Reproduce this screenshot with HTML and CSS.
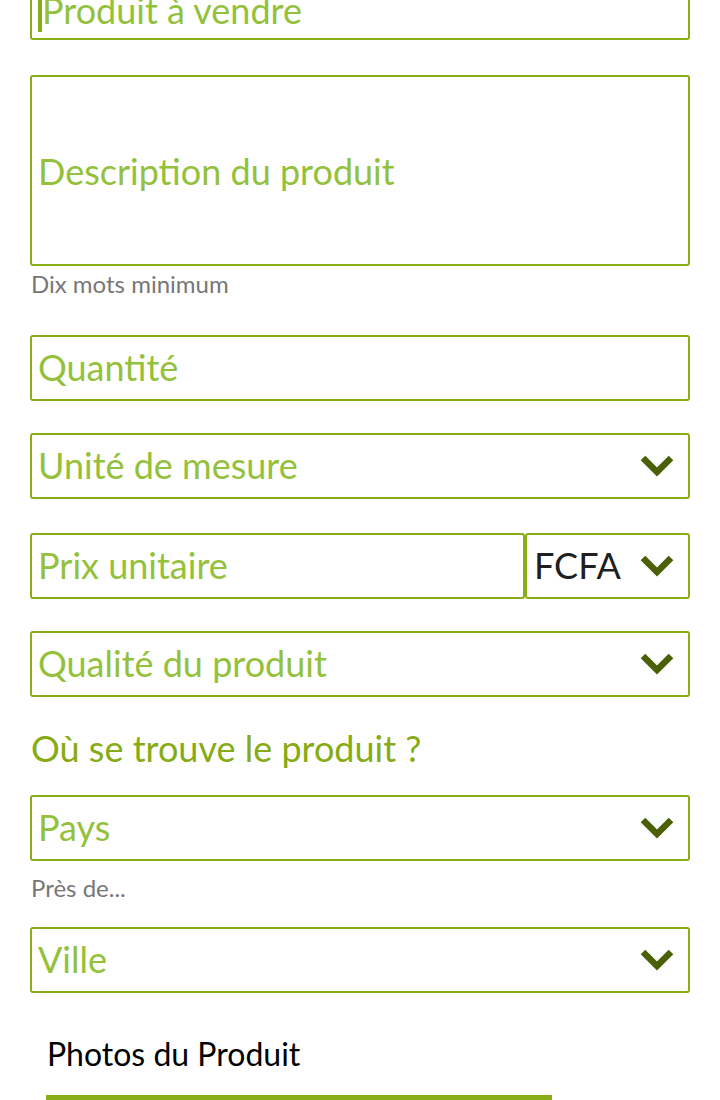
FILE: index.html
```html
<!DOCTYPE html>
<html lang="fr">
<head>
<meta charset="utf-8">
<title>Vendre un produit</title>
<link rel="stylesheet" href="styles.css">
</head>
<body>
<form class="form">
  <div class="field field-top"><span class="caret"></span><span class="ph">Produit à vendre</span></div>

  <div class="field field-area"><span class="ph">Description du produit</span></div>
  <p class="hint hint-desc">Dix mots minimum</p>

  <div class="field field-qty"><span class="ph">Quantité</span></div>

  <div class="field select gap-a"><span class="ph">Unité de mesure</span>
    <svg class="chev" viewBox="0 0 34 24" width="34" height="24"><polyline points="3,4 17,18 31,4" /></svg>
  </div>

  <div class="price-row gap-b">
    <div class="field price"><span class="ph">Prix unitaire</span></div>
    <div class="field select currency"><span class="val">FCFA</span>
      <svg class="chev" viewBox="0 0 34 24" width="34" height="24"><polyline points="3,4 17,18 31,4" /></svg>
    </div>
  </div>

  <div class="field select gap-c"><span class="ph">Qualité du produit</span>
    <svg class="chev" viewBox="0 0 34 24" width="34" height="24"><polyline points="3,4 17,18 31,4" /></svg>
  </div>

  <h2 class="section-title">Où se trouve le produit ?</h2>

  <div class="field select field-pays"><span class="ph">Pays</span>
    <svg class="chev" viewBox="0 0 34 24" width="34" height="24"><polyline points="3,4 17,18 31,4" /></svg>
  </div>
  <p class="hint hint-pres">Près de...</p>

  <div class="field select field-ville"><span class="ph">Ville</span>
    <svg class="chev" viewBox="0 0 34 24" width="34" height="24"><polyline points="3,4 17,18 31,4" /></svg>
  </div>

  <div class="tabs">
    <div class="tab active">Photos du Produit</div>
  </div>
</form>
</body>
</html>
```

FILE: styles.css
```css
* { box-sizing: border-box; }
html, body { margin: 0; padding: 0; background: #ffffff; }
body {
  font-family: Lato, "Noto Sans", sans-serif;
  overflow: hidden;
}
.form {
  margin: -26px 30px 0 30px;
  display: flex;
  flex-direction: column;
}
.field {
  height: 66px;
  border: 2px solid #88ad17;
  border-radius: 3px;
  display: flex;
  align-items: center;
  padding: 0 12px 0 6px;
  font-size: 36px;
  line-height: 43px;
  color: #94c13c;
  background: #fff;
}
.ph { color: #94c13c; white-space: nowrap; }
.val { color: #1f1f1f; }
.field-top { padding-top: 6px; }
.caret {
  display: inline-block;
  flex: none;
  width: 4px;
  height: 42px;
  background: #88ad17;
  align-self: flex-start;
  margin-top: 8px;
  margin-right: 0;
}
.field-area {
  height: 191px;
  margin-top: 35px;
  padding-top: 1px;
}
.hint {
  margin: 0;
  font-size: 24px;
  line-height: 1.2;
  color: #777777;
  padding-left: 1px;
}
.hint-desc { margin-top: 4px; }
.field-qty { margin-top: 36px; }
.gap-a { margin-top: 32px; }
.gap-b { margin-top: 34px; }
.gap-c { margin-top: 32px; }
.select { justify-content: space-between; }
.chev { flex: none; margin-right: 2px; }
.chev polyline {
  fill: none;
  stroke: #4a5f06;
  stroke-width: 6.5;
  stroke-linecap: butt;
  stroke-linejoin: miter;
}
.price-row {
  display: flex;
  height: 66px;
}
.price { flex: 1; border-radius: 3px; }
.currency {
  width: 165px;
  flex: none;
  padding-left: 7px;
}
.section-title {
  margin: 30px 0 0 1px;
  font-size: 36px;
  line-height: 1.2;
  font-weight: 400;
  color: #86ab14;
}
.field-pays { margin-top: 25px; }
.hint-pres { margin-top: 13px; }
.field-ville { margin-top: 24px; }
.tabs {
  margin-top: 42px;
  padding-left: 16px;
  display: flex;
}
.tab {
  width: 506px;
  font-size: 32px;
  line-height: 1.2;
  color: #000000;
  padding: 0 0 22px 1px;
  border-bottom: 6px solid #88ad17;
}
```
